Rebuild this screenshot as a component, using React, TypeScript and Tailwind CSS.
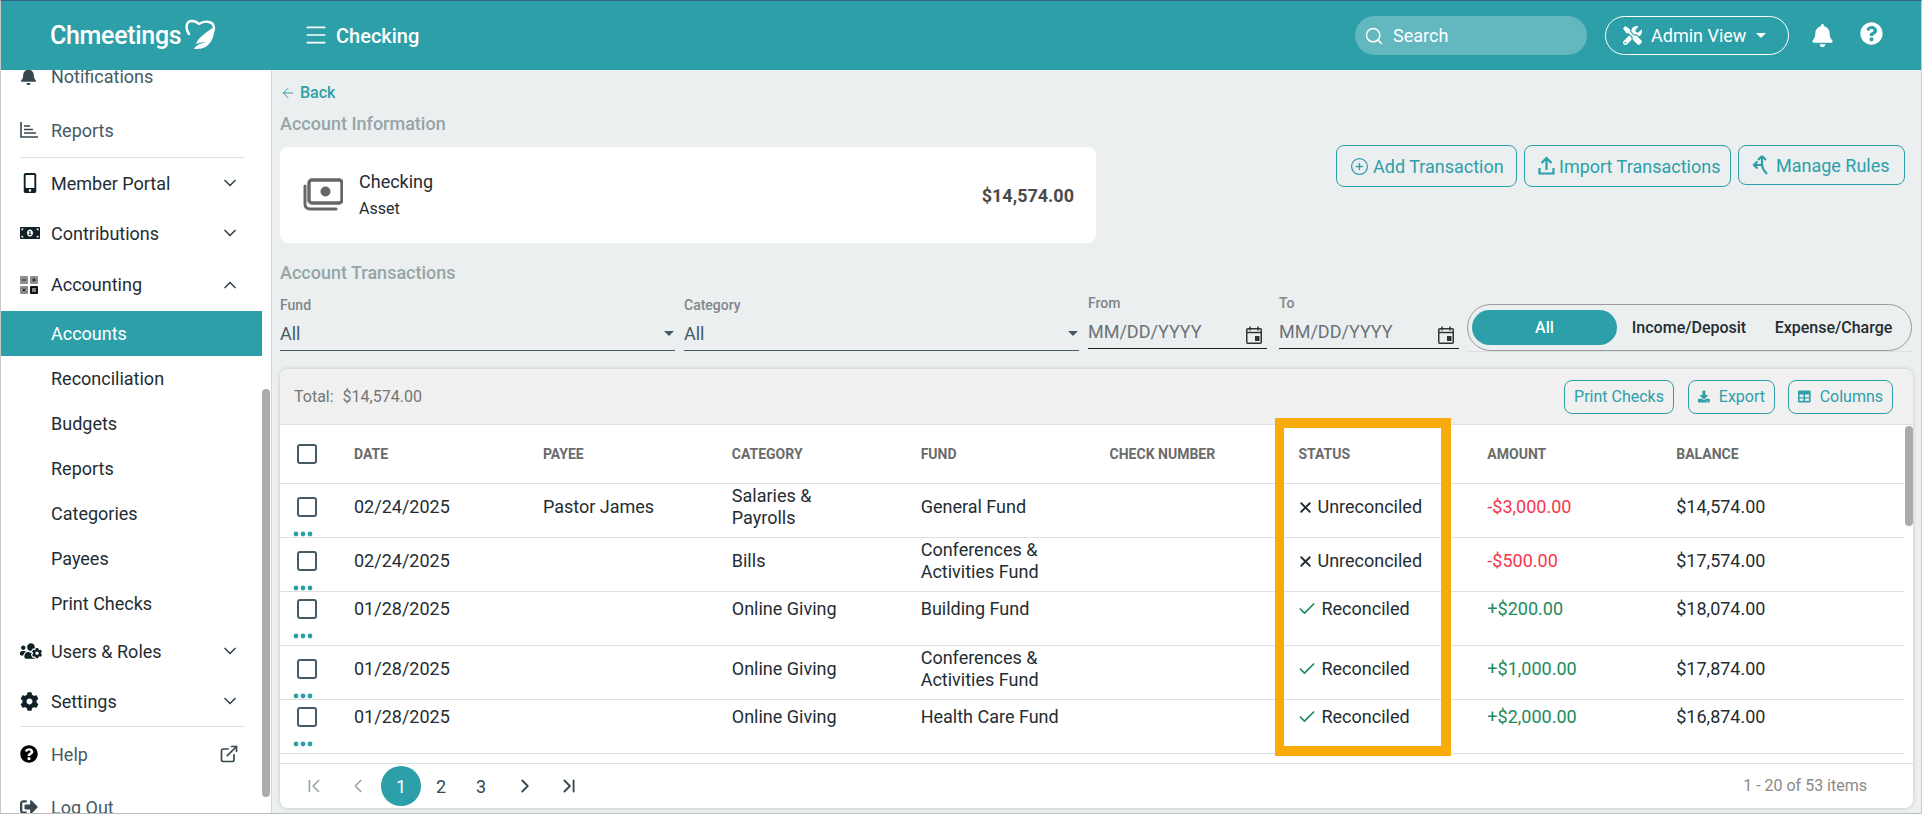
import React from "react";
import { Search, Menu, ChevronDown, ChevronUp, ChevronLeft, ChevronRight, ChevronFirst, ChevronLast, Check, X, ArrowLeft, CirclePlus } from "lucide-react";
import { FaBell, FaMobileAlt, FaMoneyBillAlt, FaUsersCog, FaCog, FaQuestionCircle, FaTools, FaSignOutAlt, FaDownload } from "react-icons/fa";
import { FiExternalLink } from "react-icons/fi";

const Logo = () => (
  <svg width="34" height="34" viewBox="0 0 34 34" fill="none" className="ml-[2px]">
    <path d="M6 16C2 10 3 3 9 3c3 0 5 1 7 3 3-2 6-3 10-2 5 1 6 6 4 10" stroke="white" strokeWidth="2.4" strokeLinecap="round" />
    <path d="M31 9c1 8-2 15-7 19-4 3-9 3-13 3 1-2 3-4 6-5l6-2c-4 0-7 1-10 2 2-6 8-10 18-17z" fill="white" />
  </svg>
);

const ReportsIcon = () => (
  <svg width="18" height="16" viewBox="0 0 18 16" fill="none">
    <path d="M1 0v15h17" stroke="#37474f" strokeWidth="1.6" />
    <path d="M4 4h6M4 7.5h9M4 11h12" stroke="#37474f" strokeWidth="1.6" />
  </svg>
);

const CalcIcon = () => (
  <svg width="18" height="18" viewBox="0 0 18 18">
    <rect x="0" y="0" width="8" height="8" rx="1" fill="#8f8f8f" />
    <rect x="10" y="0" width="8" height="8" rx="1" fill="#8f8f8f" />
    <rect x="0" y="10" width="8" height="8" rx="1" fill="#8f8f8f" />
    <rect x="10" y="10" width="8" height="8" rx="1" fill="#111" />
    <path d="M2 4h4M12 4h4M14 2v4M2.5 12.5l3 3M5.5 12.5l-3 3" stroke="#222" strokeWidth="1" />
    <path d="M12 13h4M12 15h4" stroke="#fff" strokeWidth="1" />
  </svg>
);

const MoneyIcon = () => (
  <svg width="40" height="34" viewBox="0 0 40 34" fill="none">
    <rect x="6" y="2" width="33" height="23" rx="3" stroke="#666" strokeWidth="3.4" />
    <circle cx="22.5" cy="13.5" r="5" fill="#666" />
    <path d="M2 8v18c0 3 2 5 5 5h26" stroke="#666" strokeWidth="3" strokeLinecap="round" />
  </svg>
);

const UploadIcon = () => (
  <svg width="17" height="20" viewBox="0 0 17 20" fill="none" stroke="#2d9fa9" strokeWidth="2.2">
    <path d="M8.5 14V2M3.5 7l5-5 5 5" />
    <path d="M1.5 12v5.5h14V12" />
  </svg>
);

const RulesIcon = () => (
  <svg width="20" height="22" viewBox="0 0 20 22" fill="none" stroke="#2d9fa9" strokeWidth="2.2">
    <path d="M10 2 6 6M10 2l4 4" />
    <path d="M10 3v7c0 4 2 7 5 10" />
    <path d="M10 11H2M5.5 7.5 2 11l3.5 3.5" />
  </svg>
);

const CalendarIcon = () => (
  <svg width="16" height="18" viewBox="0 0 16 18" fill="none" className="shrink-0">
    <rect x="0.75" y="2.75" width="14.5" height="14.5" rx="1" stroke="#333" strokeWidth="1.5" />
    <path d="M1 6.5h14" stroke="#333" strokeWidth="1.5" />
    <path d="M4 0.5v4M12 0.5v4" stroke="#333" strokeWidth="1.5" />
    <rect x="9" y="10" width="4.5" height="5" fill="#333" />
  </svg>
);

const ColumnsIcon = () => (
  <svg width="16" height="15" viewBox="0 0 16 15">
    <rect x="0" y="0" width="16" height="15" rx="1.5" fill="#2d9fa9" />
    <rect x="2" y="5" width="5" height="3.5" fill="#f0f0f0" />
    <rect x="9" y="5" width="5" height="3.5" fill="#f0f0f0" />
    <rect x="2" y="10" width="5" height="3" fill="#f0f0f0" />
    <rect x="9" y="10" width="5" height="3" fill="#f0f0f0" />
  </svg>
);

const Caret = () => <div className="w-0 h-0 border-x-[5px] border-x-transparent border-t-[5px] border-t-[#455a64]" />;

function NavRow({ icon, label, h, chevron, color = "text-[#37474f]" }: { icon?: React.ReactNode; label: string; h: string; chevron?: "down" | "up"; color?: string }) {
  return (
    <div className={`flex items-center pl-[19px] pr-[22px] text-[18px] ${h} ${color}`}>
      <div className="w-[31px] flex items-center shrink-0">{icon}</div>
      <span className="flex-1">{label}</span>
      {chevron === "down" && <ChevronDown size={20} className="text-[#37474f]" />}
      {chevron === "up" && <ChevronUp size={20} className="text-[#37474f]" />}
    </div>
  );
}

function SubRow({ label, active }: { label: string; active?: boolean }) {
  return (
    <div className={`flex items-center pl-[50px] h-[45px] text-[18px] ${active ? "bg-[#2d9fa9] text-white" : "text-[#1f2d33]"}`}>{label}</div>
  );
}

const Sidebar = () => (
  <div className="w-[271px] shrink-0 flex bg-white border-r border-[#d5d9da] overflow-hidden">
    <div className="w-[261px] shrink-0 -mt-[21px]">
      <NavRow h="h-[54px]" color="text-[#455a64]" label="Notifications" icon={<FaBell size={17} className="text-[#37474f]" />} />
      <NavRow h="h-[54px]" color="text-[#455a64]" label="Reports" icon={<ReportsIcon />} />
      <div className="h-px bg-[#e0e0e0] ml-[19px] mr-[17px]" />
      <NavRow h="h-[50px]" color="text-[#1f2d33]" label="Member Portal" icon={<FaMobileAlt size={20} className="text-[#102027]" />} chevron="down" />
      <NavRow h="h-[50px]" color="text-[#1f2d33]" label="Contributions" icon={<FaMoneyBillAlt size={20} className="text-[#102027]" />} chevron="down" />
      <NavRow h="h-[53px]" color="text-[#1f2d33]" label="Accounting" icon={<CalcIcon />} chevron="up" />
      <SubRow label="Accounts" active />
      <SubRow label="Reconciliation" />
      <SubRow label="Budgets" />
      <SubRow label="Reports" />
      <SubRow label="Categories" />
      <SubRow label="Payees" />
      <SubRow label="Print Checks" />
      <NavRow h="h-[50px]" color="text-[#1f2d33]" label="Users & Roles" icon={<FaUsersCog size={22} className="text-[#102027]" />} chevron="down" />
      <NavRow h="h-[50px]" color="text-[#1f2d33]" label="Settings" icon={<FaCog size={19} className="text-[#102027]" />} chevron="down" />
      <div className="h-px bg-[#e0e0e0] ml-[19px] mr-[17px]" />
      <div className="flex items-center pl-[19px] pr-[23px] h-[54px] text-[18px] text-[#455a64]">
        <div className="w-[31px] flex items-center shrink-0"><FaQuestionCircle size={18} className="text-black" /></div>
        <span className="flex-1">Help</span>
        <FiExternalLink size={20} className="text-[#37474f]" />
      </div>
      <NavRow h="h-[52px]" color="text-[#455a64]" label="Log Out" icon={<FaSignOutAlt size={18} className="text-[#37474f]" />} />
    </div>
    <div className="w-[8px] h-[408px] mt-[319px] rounded-full bg-[#ababab] shrink-0" />
  </div>
);

const Header = () => (
  <div className="h-[69px] shrink-0 bg-[#2d9fa9] flex items-center text-white">
    <div className="w-[302px] shrink-0 pl-[49px] flex items-center -mt-[1px]">
      <span className="text-[25px] font-medium tracking-[-0.3px] leading-none">Chmeetings</span>
      <Logo />
    </div>
    <Menu size={26} strokeWidth={1.6} className="-mt-[1px]" />
    <span className="ml-[7px] text-[20px] font-medium">Checking</span>
    <div className="flex-1" />
    <div className="w-[232px] h-[39px] rounded-full bg-[#63b7bf] flex items-center pl-[9px] gap-[9px] text-[18px] text-white">
      <Search size={20} strokeWidth={1.8} />
      <span>Search</span>
    </div>
    <div className="ml-[18px] w-[184px] h-[39px] rounded-full border border-white flex items-center pl-[17px] text-[18px]">
      <FaTools size={19} />
      <span className="ml-[9px]">Admin View</span>
      <div className="ml-[10px] w-0 h-0 border-x-[5px] border-x-transparent border-t-[5px] border-t-white" />
    </div>
    <FaBell size={23} className="ml-[22px]" />
    <FaQuestionCircle size={23} className="ml-[26px] -mt-[4px] mr-[38px]" />
  </div>
);

const btn = "flex items-center rounded-[8px] border border-[#2d9fa9] text-[#2d9fa9] text-[18px] bg-transparent";

const TopButtons = () => (
  <div className="flex-1 flex justify-end items-start gap-[7px] pr-[8px]">
    <div className={`${btn} h-[42px] w-[181px] pl-[13px] gap-[4px]`}><CirclePlus size={19} strokeWidth={1.6} /><span>Add Transaction</span></div>
    <div className={`${btn} h-[42px] w-[207px] pl-[13px] gap-[4px]`}><UploadIcon /><span>Import Transactions</span></div>
    <div className={`${btn} h-[40px] w-[167px] pl-[13px] gap-[4px]`}><RulesIcon /><span>Manage Rules</span></div>
  </div>
);

function SelectFilter({ label, w }: { label: string; w: string }) {
  return (
    <div className={`${w} shrink-0 h-[55px] border-b border-[#455a64] relative`}>
      <div className="text-[14px] font-medium text-[#80868a] leading-[18px]">{label}</div>
      <div className="flex items-center justify-between mt-[2px] h-[34px]">
        <span className="text-[18px] text-[#455a64]">All</span>
        <div className="mr-[1px]"><Caret /></div>
      </div>
    </div>
  );
}

function DateFilter({ label, w }: { label: string; w: string }) {
  return (
    <div className={`${w} shrink-0 h-[54px] -mt-[1px] border-b border-[#1f1f1f]`}>
      <div className="text-[14px] font-medium text-[#80868a] leading-[16px]">{label}</div>
      <div className="flex items-center justify-between mt-[3px] h-[34px] pr-[5px]">
        <span className="text-[18px] text-[#6b7377]">MM/DD/YYYY</span>
        <div className="mt-[8px]"><CalendarIcon /></div>
      </div>
    </div>
  );
}

const Filters = () => (
  <div className="flex items-start mt-[11px]">
    <SelectFilter label="Fund" w="w-[395px]" />
    <div className="w-[9px]" />
    <SelectFilter label="Category" w="w-[395px]" />
    <div className="w-[9px]" />
    <DateFilter label="From" w="w-[179px]" />
    <div className="w-[12px]" />
    <DateFilter label="To" w="w-[180px]" />
    <div className="w-[8px]" />
    <div className="w-[445px] shrink-0 mt-[8px] border-b border-[#dde1e2]">
      <div className="h-[47px] rounded-full border border-[#9a9a9a] flex items-center pl-[4px] text-[16px] font-medium text-[#1f2d33]">
        <div className="w-[145px] h-[35px] rounded-full bg-[#2d9fa9] text-white flex items-center justify-center">All</div>
        <div className="w-[144px] text-center">Income/Deposit</div>
        <div className="w-[145px] text-center">Expense/Charge</div>
      </div>
    </div>
  </div>
);

const cols = "grid grid-cols-[74px_repeat(7,188.9px)_1fr] items-center";
const headers = ["DATE", "PAYEE", "CATEGORY", "FUND", "CHECK NUMBER", "STATUS", "AMOUNT", "BALANCE"];

const Box = () => <div className="ml-[17px] w-[20px] h-[20px] rounded-[3px] border-2 border-[#455a64] bg-white" />;

type Row = { date: string; payee: string; cat: string[]; fund: string[]; ok: boolean; amount: string; bal: string };
const rows: Row[] = [
  { date: "02/24/2025", payee: "Pastor James", cat: ["Salaries &", "Payrolls"], fund: ["General Fund"], ok: false, amount: "-$3,000.00", bal: "$14,574.00" },
  { date: "02/24/2025", payee: "", cat: ["Bills"], fund: ["Conferences &", "Activities Fund"], ok: false, amount: "-$500.00", bal: "$17,574.00" },
  { date: "01/28/2025", payee: "", cat: ["Online Giving"], fund: ["Building Fund"], ok: true, amount: "+$200.00", bal: "$18,074.00" },
  { date: "01/28/2025", payee: "", cat: ["Online Giving"], fund: ["Conferences &", "Activities Fund"], ok: true, amount: "+$1,000.00", bal: "$17,874.00" },
  { date: "01/28/2025", payee: "", cat: ["Online Giving"], fund: ["Health Care Fund"], ok: true, amount: "+$2,000.00", bal: "$16,874.00" },
];

const Dots = () => (
  <svg width="20" height="6" viewBox="0 0 20 6" className="ml-[13px]">
    <circle cx="3" cy="3" r="2.4" fill="#2d9fa9" />
    <circle cx="10" cy="3" r="2.4" fill="#2d9fa9" />
    <circle cx="17" cy="3" r="2.4" fill="#2d9fa9" />
  </svg>
);

const TableRow = ({ r }: { r: Row }) => (
  <div className={`${cols} h-[54px] border-b border-[#e0e0e0] text-[18px] text-[#1f2d33] leading-[22.5px]`}>
    <Box />
    <div>{r.date}</div>
    <div>{r.payee}</div>
    <div>{r.cat.map((c) => <div key={c}>{c}</div>)}</div>
    <div>{r.fund.map((c) => <div key={c}>{c}</div>)}</div>
    <div />
    <div className="flex items-center">
      {r.ok ? <Check size={20} strokeWidth={2} className="text-[#1c8a5c] mr-[4px] -ml-[1px]" /> : <X size={17} strokeWidth={2.6} className="text-[#1f2d33] mr-[3px] -ml-[1px]" />}
      <span>{r.ok ? "Reconciled" : "Unreconciled"}</span>
    </div>
    <div className={r.amount.startsWith("-") ? "text-[#f8354d]" : "text-[#1c8a5c]"}>{r.amount}</div>
    <div>{r.bal}</div>
    <Dots />
  </div>
);

const smallBtn = "flex items-center h-[34px] rounded-[8px] border border-[#2d9fa9] text-[#2d9fa9] text-[16px] px-[9px]";

const Table = () => (
  <div className="relative mt-[17px] flex-1 mb-[5px] bg-white rounded-[8px] shadow-[0_0_4px_rgba(0,0,0,0.18)] overflow-hidden flex flex-col">
    <div className="h-[56px] shrink-0 bg-[#f0f0f0] border-b border-[#e0e0e0] flex items-center pl-[14px] pr-[20px] text-[16px] text-[#757575]">
      <span>Total:</span>
      <span className="ml-[9px]">$14,574.00</span>
      <div className="flex-1" />
      <div className={`${smallBtn} w-[110px] justify-center`}>Print Checks</div>
      <div className={`${smallBtn} w-[87px] ml-[14px] justify-center gap-[9px]`}><FaDownload size={13} /><span>Export</span></div>
      <div className={`${smallBtn} w-[105px] ml-[13px] justify-center gap-[9px]`}><ColumnsIcon /><span>Columns</span></div>
    </div>
    <div className="h-[338px] shrink-0 flex overflow-hidden">
      <div className="flex-1 min-w-0">
        <div className={`${cols} h-[59px] border-b border-[#e0e0e0] text-[14px] font-bold text-[#6b6b6b]`}>
          <Box />
          {headers.map((h) => <div key={h}>{h}</div>)}
        </div>
        {rows.map((r, i) => <TableRow key={i} r={r} />)}
      </div>
      <div className="w-[9px] shrink-0"><div className="w-[8px] h-[100px] ml-px mt-px rounded-full bg-[#ababab]" /></div>
    </div>
    <div className="flex-1 border-t border-[#e0e0e0] flex items-center pl-[23px] pr-[46px] text-[18px] text-[#37474f]">
      <ChevronFirst size={22} strokeWidth={1.8} className="text-[#9aa5a9]" />
      <ChevronLeft size={22} strokeWidth={1.8} className="text-[#9aa5a9] ml-[22px]" />
      <div className="ml-[12px] w-[40px] h-[40px] rounded-full bg-[#2d9fa9] text-white flex items-center justify-center">1</div>
      <div className="w-[40px] text-center">2</div>
      <div className="w-[40px] text-center">3</div>
      <ChevronRight size={22} strokeWidth={2} className="ml-[13px]" />
      <ChevronLast size={22} strokeWidth={2} className="ml-[22px]" />
      <div className="flex-1" />
      <span className="text-[16px] text-[#8a8a8a]">1 - 20 of 53 items</span>
    </div>
    <div className="absolute left-[995px] top-[49px] w-[176px] h-[338px] border-[10px] border-[#f9ab0b] border-l-[9px] pointer-events-none" />
  </div>
);

export default function App() {
  return (
    <div className="h-screen w-full overflow-hidden flex flex-col border-t border-t-[#34648e] border-l border-l-[#c8c8c8] border-r border-r-[#c8c8c8] border-b border-b-[#bdbdbd] bg-[#ebeff0] font-[Roboto,sans-serif]">
      <Header />
      <div className="flex-1 flex min-h-0">
        <Sidebar />
        <div className="flex-1 min-w-0 flex flex-col pl-[8px] pr-[8px] bg-[#ebeff0]">
          <div className="mt-[13px] flex items-center h-[20px] text-[#2d9fa9] text-[16px] font-medium">
            <ArrowLeft size={16} strokeWidth={1.5} />
            <span className="ml-[4px]">Back</span>
          </div>
          <div className="mt-[9px] h-[24px] leading-[24px] text-[18px] font-medium text-[#95a5a6]">Account Information</div>
          <div className="mt-[9px] flex items-start">
            <div className="mt-[2px] w-[816px] h-[96px] rounded-[8px] bg-white flex items-center pl-[23px] pr-[22px]">
              <MoneyIcon />
              <div className="ml-[16px] flex-1">
                <div className="text-[18px] text-[#1f2d33] leading-[22px]">Checking</div>
                <div className="text-[16px] text-[#1f2d33] mt-[6px] leading-[20px]">Asset</div>
              </div>
              <div className="text-[18px] font-bold text-[#4a4a4a]">$14,574.00</div>
            </div>
            <TopButtons />
          </div>
          <div className="mt-[18px] h-[24px] leading-[24px] text-[18px] font-medium text-[#95a5a6]">Account Transactions</div>
          <Filters />
          <Table />
        </div>
      </div>
    </div>
  );
}
